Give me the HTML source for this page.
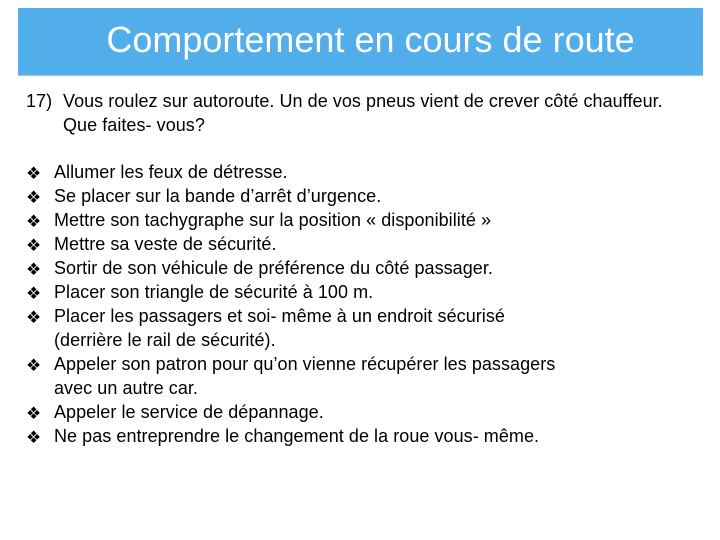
<!DOCTYPE html>
<html><head><meta charset="utf-8"><style>
body{margin:0;width:720px;height:540px;background:#fff;position:relative;font-family:"Liberation Sans",sans-serif;color:#000;overflow:hidden}
.ban{position:absolute;left:18px;top:8px;width:685px;height:67px;background:#52aeeb;border-bottom:1px solid #9cc9e8}
.ban div{position:absolute;left:20px;right:0;top:12px;text-align:center;color:#fff;font-size:36px;line-height:40px}
.l{position:absolute;font-size:18px;line-height:24px;white-space:nowrap;letter-spacing:0.05px}
.b{position:absolute;left:26px;font-size:17px;line-height:24px;margin-top:2px}
</style></head><body>
<div class="ban"><div>Comportement en cours de route</div></div>
<div class="l" style="left:26px;top:89px">17)</div>
<div class="l" style="left:63px;top:89px">Vous roulez sur autoroute. Un de vos pneus vient de crever côté chauffeur.</div>
<div class="l" style="left:63px;top:113px">Que faites- vous?</div>

<div class="b" style="top:160px">❖</div><div class="l" style="left:54px;top:160px">Allumer les feux de détresse.</div>
<div class="b" style="top:184px">❖</div><div class="l" style="left:54px;top:184px">Se placer sur la bande d’arrêt d’urgence.</div>
<div class="b" style="top:208px">❖</div><div class="l" style="left:54px;top:208px">Mettre son tachygraphe sur la position « disponibilité »</div>
<div class="b" style="top:232px">❖</div><div class="l" style="left:54px;top:232px">Mettre sa veste de sécurité.</div>
<div class="b" style="top:256px">❖</div><div class="l" style="left:54px;top:256px">Sortir de son véhicule de préférence du côté passager.</div>
<div class="b" style="top:280px">❖</div><div class="l" style="left:54px;top:280px">Placer son triangle de sécurité à 100 m.</div>
<div class="b" style="top:304px">❖</div><div class="l" style="left:54px;top:304px">Placer les passagers et soi- même à un endroit sécurisé</div>
<div class="l" style="left:54px;top:328px">(derrière le rail de sécurité).</div>
<div class="b" style="top:352px">❖</div><div class="l" style="left:54px;top:352px">Appeler son patron pour qu’on vienne récupérer les passagers</div>
<div class="l" style="left:54px;top:376px">avec un autre car.</div>
<div class="b" style="top:400px">❖</div><div class="l" style="left:54px;top:400px">Appeler le service de dépannage.</div>
<div class="b" style="top:424px">❖</div><div class="l" style="left:54px;top:424px">Ne pas entreprendre le changement de la roue vous- même.</div>
</body></html>
